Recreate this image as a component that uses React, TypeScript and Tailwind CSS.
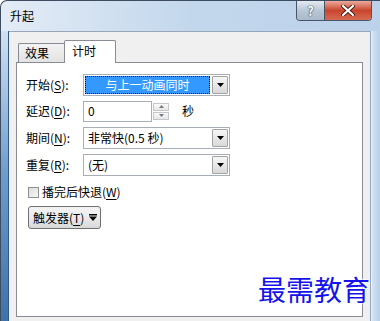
const font = "font-['Noto_Sans_CJK_SC','Noto_Sans',sans-serif]";

function DropArrow() {
  return (
    <svg width="7" height="4" viewBox="0 0 7 4">
      <polygon points="0,0 7,0 3.5,4" fill="#000" />
    </svg>
  );
}

function Combo({ children, selected }: { children: React.ReactNode; selected?: boolean }) {
  return (
    <div className="flex h-[22px] w-[147px] items-center border border-[#a9afb8] bg-white pl-[1px] pr-[1px]">
      {selected ? (
        <div className="flex h-[18px] w-[125px] items-center justify-center border border-dotted border-black bg-[#3399ff] text-white">
          {children}
        </div>
      ) : (
        <div className="flex h-[18px] w-[125px] items-center pl-[3px]">{children}</div>
      )}
      <div className="ml-auto flex h-[18px] w-[16px] items-center justify-center rounded-[1px] border border-[#a3a3a3] bg-gradient-to-b from-[#f6f6f6] to-[#d9d9d9]">
        <DropArrow />
      </div>
    </div>
  );
}

function U({ children }: { children: React.ReactNode }) {
  return <span className="underline underline-offset-2">{children}</span>;
}

function Label({ children }: { children: React.ReactNode }) {
  return <div className="w-[57px] shrink-0">{children}</div>;
}

function SpinBtn({ up }: { up?: boolean }) {
  return (
    <div className="flex h-[8px] w-[16px] items-center justify-center border border-[#c4c8cc] bg-gradient-to-b from-[#fbfbfb] to-[#e6e6e6]">
      <svg width="5" height="3" viewBox="0 0 5 3">
        <polygon points={up ? "0,3 5,3 2.5,0" : "0,0 5,0 2.5,3"} fill="#7a7a7a" />
      </svg>
    </div>
  );
}

export default function App() {
  return (
    <div
      className={`relative flex h-[321px] w-[380px] flex-col overflow-hidden rounded-tl-[7px] border-l border-t border-[#3d4c60] bg-gradient-to-r from-[#e3ecf6] via-[#c3d7ec] to-[#bcd2ea] text-[12px] leading-none text-black ${font}`}
    >
      {/* title bar */}
      <div className="flex h-[30px] shrink-0 items-start">
        <div className="pl-[9px] pt-[9px] text-[12px] text-black">升起</div>
        <div className="ml-auto mr-[8px] flex h-[20px] overflow-hidden rounded-b-[4px] border border-t-0 border-[#47566a]">
          <div className="flex w-[28px] items-center justify-center border-r border-[#47566a] bg-gradient-to-b from-[#e4ebf3] via-[#b9c7d6] to-[#a9b9cb]">
            <span className="text-[13px] font-bold text-white [text-shadow:0_0_1px_#33475e,0_0_1px_#33475e,0_0_1px_#33475e]">?</span>
          </div>
          <div className="flex w-[46px] items-center justify-center bg-gradient-to-b from-[#e9a99b] via-[#c9452d] to-[#d66a52]">
            <svg width="14" height="11" viewBox="0 0 14 11">
              <path d="M2 1 L12 10 M12 1 L2 10" stroke="#4a1a12" strokeWidth="4" strokeLinecap="round" />
              <path d="M2 1 L12 10 M12 1 L2 10" stroke="#fff" strokeWidth="2.2" strokeLinecap="round" />
            </svg>
          </div>
        </div>
      </div>

      {/* body */}
      <div className="flex flex-1">
        <div className="w-[8px] border-r border-[#2f5a86] bg-gradient-to-b from-[#d2e1f1] via-[#6d9bcb] to-[#3f72a8]" />
        <div className="flex flex-1 flex-col border-r border-t border-[#97a6b8] bg-[#f0f0f0] pb-[4px] pl-[7px] pr-[7px] pt-[8px]">
          {/* tabs */}
          <div className="flex h-[22px] items-end pl-[2px]">
            <div className="flex h-[19px] w-[46px] items-center rounded-tl-[2px] border border-b-0 border-r-0 border-[#898c95] bg-gradient-to-b from-[#f3f3f3] to-[#e3e3e3] pl-[6px]">
              效果
            </div>
            <div className="relative z-10 -mb-px flex h-[23px] w-[52px] items-center rounded-t-[2px] border border-b-0 border-[#898c95] bg-white pb-[3px] pl-[7px]">
              计时
            </div>
          </div>

          {/* panel */}
          <div className="flex flex-1 flex-col border border-[#898c95] bg-white pl-[9px] pt-[11px]">
            <div className="flex h-[22px] items-center">
              <Label>
                开始(<U>S</U>):
              </Label>
              <Combo selected>与上一动画同时</Combo>
            </div>
            <div className="mt-[4px] flex h-[22px] items-center">
              <Label>
                延迟(<U>D</U>):
              </Label>
              <div className="flex h-[21px] w-[69px] items-center border border-[#a9afb8] bg-white pl-[4px]">0</div>
              <div className="ml-[1px] flex flex-col gap-[1px]">
                <SpinBtn up />
                <SpinBtn />
              </div>
              <div className="ml-[13px]">秒</div>
            </div>
            <div className="mt-[5px] flex h-[22px] items-center">
              <Label>
                期间(<U>N</U>):
              </Label>
              <Combo>非常快(0.5 秒)</Combo>
            </div>
            <div className="mt-[5px] flex h-[22px] items-center">
              <Label>
                重复(<U>R</U>):
              </Label>
              <Combo>(无)</Combo>
            </div>
            <div className="mt-[8px] flex h-[16px] items-center pl-[2px]">
              <div className="h-[11px] w-[11px] border border-[#8e8f8f] bg-gradient-to-br from-[#dcdcdc] to-[#f7f7f7]" />
              <div className="ml-[3px]">
                播完后快退(<U>W</U>)
              </div>
            </div>
            <div className="mt-[6px] pl-[2px]">
              <div className="flex h-[23px] w-[73px] items-center rounded-[3px] border border-[#707070] bg-gradient-to-b from-[#f3f3f3] via-[#ebebeb] to-[#d8d8d8] pl-[4px]">
                触发器(<U>T</U>)
                <svg className="ml-[5px]" width="8" height="7" viewBox="0 0 8 7">
                  <rect x="0" y="0" width="8" height="1.5" fill="#000" />
                  <polygon points="0,2.5 8,2.5 4,7" fill="#000" />
                </svg>
              </div>
            </div>
          </div>
        </div>
        <div className="w-[9px] border-l border-[#e9f0f8] bg-gradient-to-r from-[#d4e3f2] to-[#b7cfe8]" />
      </div>

      {/* watermark */}
      <div
        className={`absolute left-[257px] top-[274px] text-[28px] leading-none tracking-[0px] text-[#1414ea] [text-shadow:0_0_2px_#fff,0_0_2px_#fff,0_0_3px_#fff] ${font}`}
      >
        最需教育
      </div>
    </div>
  );
}
